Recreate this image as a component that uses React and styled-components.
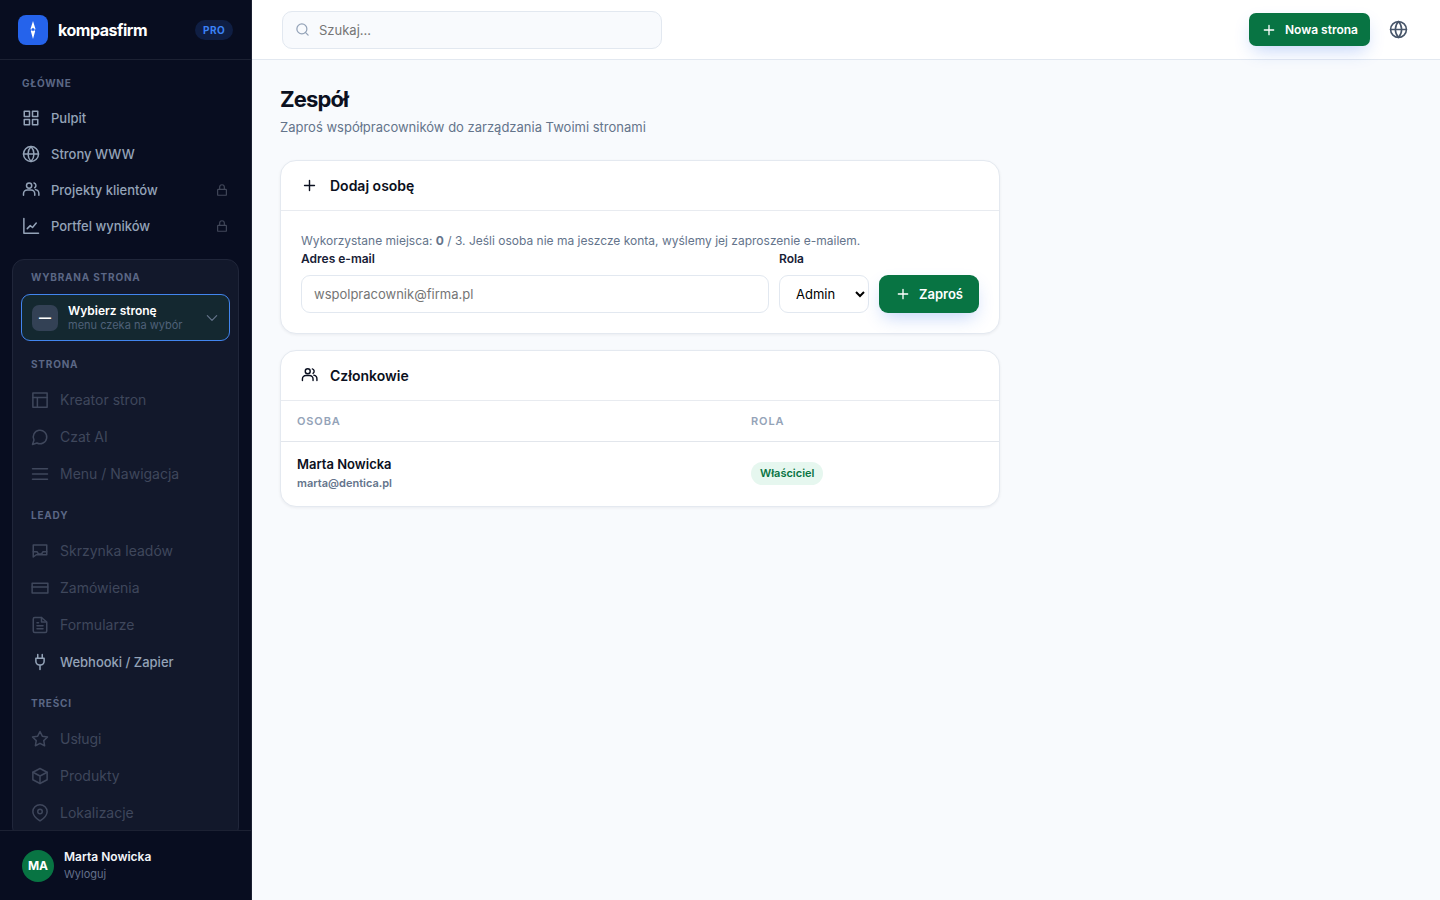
import React from 'react';
import styled, { createGlobalStyle } from 'styled-components';

const GlobalStyle = createGlobalStyle`
  * {
    box-sizing: border-box;
  }
  body {
    margin: 0;
    background: #f8fafd;
    color: #0b1020;
    font-family: 'Inter', 'Liberation Sans', sans-serif;
    font-size: 14px;
    line-height: 20px;
  }
  button, input, select {
    font-family: inherit;
  }
`;

const ICONS = {
  grid: (
    <>
      <rect x="3" y="3" width="7" height="7" />
      <rect x="14" y="3" width="7" height="7" />
      <rect x="3" y="14" width="7" height="7" />
      <rect x="14" y="14" width="7" height="7" />
    </>
  ),
  globe: (
    <>
      <circle cx="12" cy="12" r="10" />
      <path d="M2 12h20M12 2a15.3 15.3 0 0 1 4 10 15.3 15.3 0 0 1-4 10 15.3 15.3 0 0 1-4-10 15.3 15.3 0 0 1 4-10z" />
    </>
  ),
  users: (
    <>
      <circle cx="9.5" cy="6" r="3.5" />
      <path d="M2 19v-2a5 5 0 0 1 5-5h5a5 5 0 0 1 5 5v2M16 2.7a3.5 3.5 0 0 1 1 6.3M18 11.5A5.500 5.500 0 0 1 22.500 17v2" />
    </>
  ),
  chart: <path d="M2.5 2v19.500H22M7 15.500l4-4 3 2.500 5-6" />,
  lock: (
    <>
      <rect x="4.5" y="11" width="15" height="10" rx="1" />
      <path d="M8 11V7a4 4 0 0 1 8 0v4" />
    </>
  ),
  layout: (
    <>
      <rect x="2.5" y="2.5" width="19" height="19" />
      <path d="M2.5 8.5h19M8.5 8.5v13" />
    </>
  ),
  chat: <path d="M7.900 20A9 9 0 1 0 4 16.100L2 22z" />,
  menu: <path d="M2 5h20M2 12h20M2 19h20" />,
  inbox: (
    <>
      <path d="M3 20V4h18v13H7z" />
      <path d="M3 13h5l2 3h4l2-3h5" />
    </>
  ),
  card: (
    <>
      <rect x="1.5" y="5.5" width="21" height="13" />
      <path d="M1.5 10.5h21" />
    </>
  ),
  file: (
    <>
      <path d="M14 2H5a2 2 0 0 0-2 2v16a2 2 0 0 0 2 2h14a2 2 0 0 0 2-2V8z" />
      <path d="M14 2v6h6M16 13H8M16 17H8M10 9H8" />
    </>
  ),
  plug: <path d="M12 22v-6M9 7V2M15 7V2M6.5 7h11v4a5 5 0 0 1-5 5h-1a5 5 0 0 1-5-5z" />,
  star: <path d="M12 2l3.090 6.260L22 9.270l-5 4.870 1.180 6.880L12 17.770l-6.180 3.250L7 14.140 2 9.270l6.910-1.010z" />,
  box: (
    <>
      <path d="M12 2l9.500 5v10L12 22l-9.500-5V7z" />
      <path d="M2.5 7l9.500 5 9.500-5M12 12v10" />
    </>
  ),
  pin: (
    <>
      <path d="M21.500 10c0 7-9.500 12.500-9.500 12.500S2.500 17 2.500 10a9.500 9 0 0 1 19 0z" />
      <circle cx="12" cy="10" r="3" />
    </>
  ),
  plus: <path d="M12 5v14M5 12h14" />,
  search: (
    <>
      <circle cx="11" cy="11" r="8" />
      <path d="M21 21l-4.350-4.350" />
    </>
  ),
  chevron: <path d="M4 8l8 8 8-8" />,
};

const Svg = styled.svg`
  width: ${({ $size }) => $size}px;
  height: ${({ $size }) => $size}px;
  flex-shrink: 0;
  fill: none;
  stroke: currentColor;
  stroke-linecap: round;
  stroke-linejoin: round;
`;

const Icon = ({ name, size = 18, weight = 2 }) => (
  <Svg viewBox="0 0 24 24" $size={size} strokeWidth={weight} aria-hidden="true">
    {ICONS[name]}
  </Svg>
);

const Page = styled.div`
  display: flex;
  height: 100vh;
`;

const Sidebar = styled.aside`
  display: flex;
  flex-direction: column;
  flex-shrink: 0;
  width: 252px;
  background: #080d20;
  border-right: 1px solid #1c2133;
`;

const Brand = styled.div`
  display: flex;
  align-items: center;
  gap: 10px;
  height: 60px;
  padding: 0 18px;
  flex-shrink: 0;
  border-bottom: 1px solid #1c2133;
`;

const Logo = styled.svg`
  width: 30px;
  height: 30px;
  border-radius: 8px;
  background: #2563eb;
`;

const BrandName = styled.span`
  flex: 1;
  color: #ffffff;
  font-size: 16px;
  font-weight: 700;
  letter-spacing: -0.03em;
`;

const PlanBadge = styled.span`
  padding: 0 8px;
  border-radius: 10px;
  background: #0f1e43;
  color: #3b82f6;
  font-size: 10px;
  font-weight: 700;
  letter-spacing: 0.04em;
`;

const Nav = styled.nav`
  display: flex;
  flex-direction: column;
  flex: 1;
  min-height: 0;
  overflow: hidden;
  padding: 13px 12px 0;
`;

const SectionTitle = styled.div`
  padding: ${({ $spaced }) => ($spaced ? '13px 10px 7px' : '0 10px 7px')};
  color: #5b6785;
  font-size: 10px;
  font-weight: 700;
  line-height: 20px;
  letter-spacing: 0.08em;
  text-transform: uppercase;
`;

const NavLink = styled.a`
  display: flex;
  align-items: center;
  gap: 11px;
  height: 36px;
  flex-shrink: 0;
  padding: 0 10px;
  color: #94a3b8;
  font-size: 13px;
  font-weight: 500;
  text-decoration: none;
`;

const LockMark = styled.span`
  display: flex;
  margin-left: auto;
  color: #414759;
`;

const SitePanel = styled.div`
  flex-shrink: 0;
  margin-top: 15px;
  padding: 7px 8px;
  border: 1px solid #20263a;
  border-radius: 12px;
  background: #12182b;
`;

const SiteLink = styled(NavLink)`
  height: 37px;
  color: ${({ $enabled }) => ($enabled ? '#94a3b8' : '#3f475c')};
  font-size: ${({ $enabled }) => ($enabled ? 13 : 14)}px;
  font-weight: ${({ $enabled }) => ($enabled ? 500 : 400)};
`;

const SitePicker = styled.button`
  display: flex;
  align-items: center;
  gap: 10px;
  width: 100%;
  height: 47px;
  padding: 0 10px;
  border: 1px solid #4285ee;
  border-radius: 9px;
  background: #142830;
  color: #66758c;
  text-align: left;
`;

const SiteMark = styled.span`
  display: flex;
  align-items: center;
  justify-content: center;
  width: 26px;
  height: 26px;
  border-radius: 7px;
  background: #334155;
  color: #ffffff;
  font-size: 12px;
  font-weight: 700;
`;

const TwoLines = styled.span`
  display: flex;
  flex-direction: column;
  flex: 1;
`;

const PickerName = styled.span`
  color: #ffffff;
  font-size: 12px;
  font-weight: 600;
  line-height: 15px;
`;

const PickerHint = styled.span`
  color: #4f6178;
  font-size: 11px;
  line-height: 14px;
`;

const UserBar = styled.div`
  display: flex;
  align-items: center;
  gap: 10px;
  flex-shrink: 0;
  height: 70px;
  padding: 0 22px;
  border-top: 1px solid #1c2133;
`;

const Avatar = styled.span`
  display: flex;
  align-items: center;
  justify-content: center;
  width: 32px;
  height: 32px;
  border-radius: 50%;
  background: #087443;
  color: #ffffff;
  font-size: 12px;
  font-weight: 700;
`;

const UserName = styled.span`
  color: #f1f5f9;
  font-size: 12px;
  font-weight: 600;
  line-height: 18px;
`;

const LogoutLink = styled.a`
  color: #64708b;
  font-size: 11px;
  line-height: 17px;
  text-decoration: none;
`;

const Content = styled.div`
  display: flex;
  flex-direction: column;
  flex: 1;
  min-width: 0;
`;

const TopBar = styled.header`
  display: flex;
  align-items: center;
  justify-content: space-between;
  height: 60px;
  flex-shrink: 0;
  padding: 0 26px 0 30px;
  background: #ffffff;
  border-bottom: 1px solid #e2e8f0;
`;

const SearchBox = styled.label`
  display: flex;
  align-items: center;
  gap: 9px;
  width: 380px;
  height: 38px;
  padding: 0 12px;
  border: 1px solid #e2e8f0;
  border-radius: 10px;
  background: #f8fafd;
  color: #94a3b8;
`;

const SearchInput = styled.input`
  flex: 1;
  min-width: 0;
  padding: 0;
  border: none;
  outline: none;
  background: transparent;
  font-size: 13px;
  &::placeholder {
    color: #757575;
  }
`;

const Actions = styled.div`
  display: flex;
  align-items: center;
  gap: 12px;
`;

const GreenButton = styled.button`
  display: flex;
  align-items: center;
  justify-content: center;
  gap: 8px;
  height: ${({ $small }) => ($small ? 33 : 38)}px;
  padding: ${({ $small }) => ($small ? '0 12px' : '0 16px')};
  border: none;
  border-radius: ${({ $small }) => ($small ? 7 : 9)}px;
  background: #087443;
  box-shadow: 0 8px 18px -4px rgba(37, 99, 235, 0.28);
  color: #ffffff;
  font-size: ${({ $small }) => ($small ? 12 : 13)}px;
  font-weight: 600;
  white-space: nowrap;
`;

const IconButton = styled.button`
  display: flex;
  align-items: center;
  justify-content: center;
  width: 32px;
  height: 32px;
  padding: 0;
  border: none;
  background: transparent;
  color: #475569;
`;

const Main = styled.main`
  padding: 27px 28px;
`;

const Title = styled.h1`
  margin: 0;
  font-size: 22px;
  font-weight: 700;
  line-height: 24px;
  letter-spacing: -0.04em;
`;

const Subtitle = styled.p`
  margin: 6px 0 23px;
  color: #64748b;
  font-size: 13px;
  line-height: 20px;
`;

const Card = styled.section`
  max-width: 720px;
  margin-bottom: 16px;
  border: 1px solid #e4e9f0;
  border-radius: 16px;
  background: #ffffff;
  box-shadow: 0 1px 3px rgba(15, 23, 42, 0.06);
`;

const CardHeader = styled.h2`
  display: flex;
  align-items: center;
  gap: 12px;
  height: 50px;
  margin: 0;
  padding: 0 20px;
  border-bottom: 1px solid #e8ebf0;
  font-size: 14px;
  font-weight: 600;
`;

const CardBody = styled.div`
  padding: 20px;
`;

const Note = styled.p`
  margin: 0;
  color: #64748b;
  font-size: 12px;
  line-height: 19px;
`;

const InviteForm = styled.form`
  display: flex;
  align-items: flex-end;
  gap: 10px;
`;

const Field = styled.div`
  display: flex;
  flex-direction: column;
  gap: 7px;
  flex: ${({ $grow }) => ($grow ? '1' : '0 0 90px')};
`;

const FieldLabel = styled.label`
  color: #172036;
  font-size: 12px;
  font-weight: 600;
  line-height: 18px;
`;

const TextInput = styled.input`
  width: 100%;
  height: 38px;
  padding: 0 12px;
  border: 1px solid #e2e8f0;
  border-radius: 9px;
  background: #ffffff;
  font-size: 13px;
  &::placeholder {
    color: #757575;
  }
`;

const Select = styled.select`
  width: 100%;
  height: 38px;
  padding: 0 0 0 12px;
  border: 1px solid #e2e8f0;
  border-radius: 9px;
  background: #ffffff;
  color: #000000;
  font-size: 13px;
`;

const Table = styled.table`
  width: 100%;
  border-collapse: collapse;
`;

const Th = styled.th`
  height: 40px;
  width: ${({ $width }) => $width};
  padding: 0 16px;
  border-bottom: 1px solid #e2e6ec;
  color: #94a3b8;
  font-size: 11px;
  font-weight: 600;
  letter-spacing: 0.08em;
  text-align: left;
  text-transform: uppercase;
`;

const Td = styled.td`
  height: 65px;
  padding: 0 16px;
`;

const MemberName = styled.div`
  font-size: 13px;
  font-weight: 600;
  line-height: 19px;
`;

const MemberMail = styled.div`
  color: #64748b;
  font-size: 11px;
  font-weight: 600;
  line-height: 18px;
`;

const RoleBadge = styled.span`
  display: inline-block;
  padding: 2px 9px;
  border-radius: 12px;
  background: #e6f7ef;
  color: #087443;
  font-size: 11px;
  font-weight: 600;
  line-height: 19px;
`;

const MAIN_LINKS = [
  { label: 'Pulpit', icon: 'grid' },
  { label: 'Strony WWW', icon: 'globe' },
  { label: 'Projekty klientów', icon: 'users', locked: true },
  { label: 'Portfel wyników', icon: 'chart', locked: true },
];

const SITE_SECTIONS = [
  {
    title: 'Strona',
    links: [
      { label: 'Kreator stron', icon: 'layout' },
      { label: 'Czat AI', icon: 'chat' },
      { label: 'Menu / Nawigacja', icon: 'menu' },
    ],
  },
  {
    title: 'Leady',
    links: [
      { label: 'Skrzynka leadów', icon: 'inbox' },
      { label: 'Zamówienia', icon: 'card' },
      { label: 'Formularze', icon: 'file' },
      { label: 'Webhooki / Zapier', icon: 'plug', enabled: true },
    ],
  },
  {
    title: 'Treści',
    links: [
      { label: 'Usługi', icon: 'star' },
      { label: 'Produkty', icon: 'box' },
      { label: 'Lokalizacje', icon: 'pin' },
    ],
  },
];

const SideNavigation = () => (
  <Sidebar>
    <Brand>
      <Logo viewBox="0 0 30 30" aria-hidden="true">
        <path d="M15 6l2.500 8h-5zM15 24l2.200-8h-4.400z" fill="#ffffff" />
        <circle cx="15" cy="14.5" r="1.800" fill="#2563eb" stroke="#ffffff" strokeWidth="0.600" />
      </Logo>
      <BrandName>kompasfirm</BrandName>
      <PlanBadge>PRO</PlanBadge>
    </Brand>
    <Nav>
      <SectionTitle>Główne</SectionTitle>
      {MAIN_LINKS.map(({ label, icon, locked }) => (
        <NavLink key={label} href="#">
          <Icon name={icon} />
          {label}
          {locked && <LockMark><Icon name="lock" size={14} /></LockMark>}
        </NavLink>
      ))}
      <SitePanel>
        <SectionTitle>Wybrana strona</SectionTitle>
        <SitePicker type="button">
          <SiteMark>—</SiteMark>
          <TwoLines>
            <PickerName>Wybierz stronę</PickerName>
            <PickerHint>menu czeka na wybór</PickerHint>
          </TwoLines>
          <Icon name="chevron" size={14} />
        </SitePicker>
        {SITE_SECTIONS.map(({ title, links }) => (
          <React.Fragment key={title}>
            <SectionTitle $spaced>{title}</SectionTitle>
            {links.map(({ label, icon, enabled }) => (
              <SiteLink key={label} href="#" $enabled={enabled}>
                <Icon name={icon} />
                {label}
              </SiteLink>
            ))}
          </React.Fragment>
        ))}
      </SitePanel>
    </Nav>
    <UserBar>
      <Avatar>MA</Avatar>
      <TwoLines>
        <UserName>Marta Nowicka</UserName>
        <LogoutLink href="#">Wyloguj</LogoutLink>
      </TwoLines>
    </UserBar>
  </Sidebar>
);

const App = () => (
  <>
    <GlobalStyle />
    <Page>
      <SideNavigation />
      <Content>
        <TopBar>
          <SearchBox>
            <Icon name="search" size={15} />
            <SearchInput type="search" placeholder="Szukaj..." aria-label="Szukaj" />
          </SearchBox>
          <Actions>
            <GreenButton type="button" $small>
              <Icon name="plus" size={16} />
              Nowa strona
            </GreenButton>
            <IconButton type="button" aria-label="Język">
              <Icon name="globe" size={19} />
            </IconButton>
          </Actions>
        </TopBar>
        <Main>
          <Title>Zespół</Title>
          <Subtitle>Zaproś współpracowników do zarządzania Twoimi stronami</Subtitle>
          <Card>
            <CardHeader>
              <Icon name="plus" size={17} />
              Dodaj osobę
            </CardHeader>
            <CardBody>
              <Note>
                Wykorzystane miejsca: <b>0</b> / 3. Jeśli osoba nie ma jeszcze konta, wyślemy jej zaproszenie e-mailem.
              </Note>
              <InviteForm>
                <Field $grow>
                  <FieldLabel htmlFor="email">Adres e-mail</FieldLabel>
                  <TextInput id="email" type="email" placeholder="wspolpracownik@firma.pl" />
                </Field>
                <Field>
                  <FieldLabel htmlFor="role">Rola</FieldLabel>
                  <Select id="role">
                    <option>Admin</option>
                  </Select>
                </Field>
                <GreenButton type="submit">
                  <Icon name="plus" size={16} />
                  Zaproś
                </GreenButton>
              </InviteForm>
            </CardBody>
          </Card>
          <Card>
            <CardHeader>
              <Icon name="users" size={17} />
              Członkowie
            </CardHeader>
            <Table>
              <thead>
                <tr>
                  <Th>Osoba</Th>
                  <Th $width="264px">Rola</Th>
                </tr>
              </thead>
              <tbody>
                <tr>
                  <Td>
                    <MemberName>Marta Nowicka</MemberName>
                    <MemberMail>marta@dentica.pl</MemberMail>
                  </Td>
                  <Td>
                    <RoleBadge>Właściciel</RoleBadge>
                  </Td>
                </tr>
              </tbody>
            </Table>
          </Card>
        </Main>
      </Content>
    </Page>
  </>
);

export default App;
